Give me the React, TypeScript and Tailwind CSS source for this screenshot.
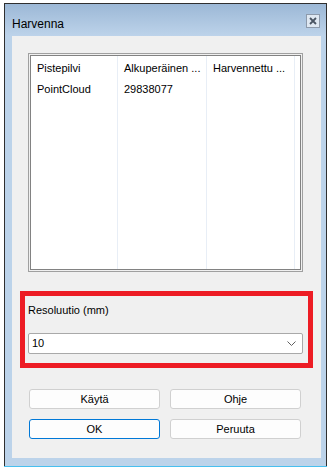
import React from "react";

const font = { fontFamily: '"Liberation Sans", Arial, sans-serif' };

function Btn({ label, focused }: { label: string; focused?: boolean }) {
  return (
    <div
      className={
        "flex h-[20px] w-[131px] items-center justify-center rounded-[3px] border bg-[#fdfdfd] text-[11px] text-black " +
        (focused ? "border-[#0078d7]" : "border-[#d0d0d0]")
      }
    >
      {label}
    </div>
  );
}

export default function App() {
  const cols = [
    { w: "w-[87px]", head: "Pistepilvi", val: "PointCloud" },
    { w: "w-[89px]", head: "Alkuperäinen ...", val: "29838077" },
    { w: "w-[88px]", head: "Harvennettu ...", val: "" },
  ];

  return (
    <div className="h-[471px] w-[333px] bg-white pl-[4px] pt-[3px]" style={font}>
      <div className="flex h-[463px] w-[323px] flex-col border border-b-0 border-[#2f2f2f] bg-[#bcd3ea]">
        {/* title bar */}
        <div className="flex h-[32px] items-start justify-between bg-gradient-to-b from-[#9cb8d6] to-[#bdd3ea] pl-[7px] pr-[6px]">
          <span className="mt-[13px] text-[12px] leading-[14px] text-black">Harvenna</span>
          <div className="mt-[10px] flex h-[14px] w-[14px] items-center justify-center border border-[#8d9aab] bg-[#dfe8f2]">
            <svg width="8" height="8" viewBox="0 0 8 8">
              <path d="M1 1 L7 7 M7 1 L1 7" stroke="#4a5563" strokeWidth="1.8" />
            </svg>
          </div>
        </div>

        {/* client area */}
        <div className="ml-[7px] mr-[5px] flex h-[422px] flex-col bg-[#f0f0f0]">
          {/* list view */}
          <div className="ml-[16px] mt-[17px] h-[219px] w-[275px] border border-[#a0a0a0] p-[1px]">
            <div className="flex h-full border border-[#828282] bg-white text-[11px] text-black">
              {cols.map((c) => (
                <div key={c.head} className={"flex flex-col border-r border-[#e8eef6] " + c.w}>
                  <div className="flex h-[22px] items-center whitespace-nowrap pl-[6px] pt-[2px]">{c.head}</div>
                  <div className="flex h-[22px] items-center whitespace-nowrap pl-[6px]">{c.val}</div>
                </div>
              ))}
            </div>
          </div>

          {/* highlighted resolution group */}
          <div className="ml-[8px] mt-[19px] h-[77px] w-[293px] border-[5px] border-[#ed1c24] px-[3px]">
            <div className="mt-[6px] text-[11px] text-black">Resoluutio (mm)</div>
            <div className="mt-[14px] flex h-[21px] w-[275px] items-center justify-between rounded-[2px] border border-[#a9a9a9] bg-white pl-[3px] pr-[6px] text-[11px] text-black">
              <span>10</span>
              <svg width="9" height="5" viewBox="0 0 9 5">
                <path d="M0.5 0.5 L4.5 4.5 L8.5 0.5" stroke="#606060" fill="none" strokeWidth="1" />
              </svg>
            </div>
          </div>

          {/* buttons */}
          <div className="ml-[17px] mt-[21px] grid w-[272px] grid-cols-2 gap-x-[10px] gap-y-[10px]">
            <Btn label="Käytä" />
            <Btn label="Ohje" />
            <Btn label="OK" focused />
            <Btn label="Peruuta" />
          </div>
        </div>
      </div>
      <div className="h-[1px] w-[323px] bg-[#48bfee]" />
    </div>
  );
}
